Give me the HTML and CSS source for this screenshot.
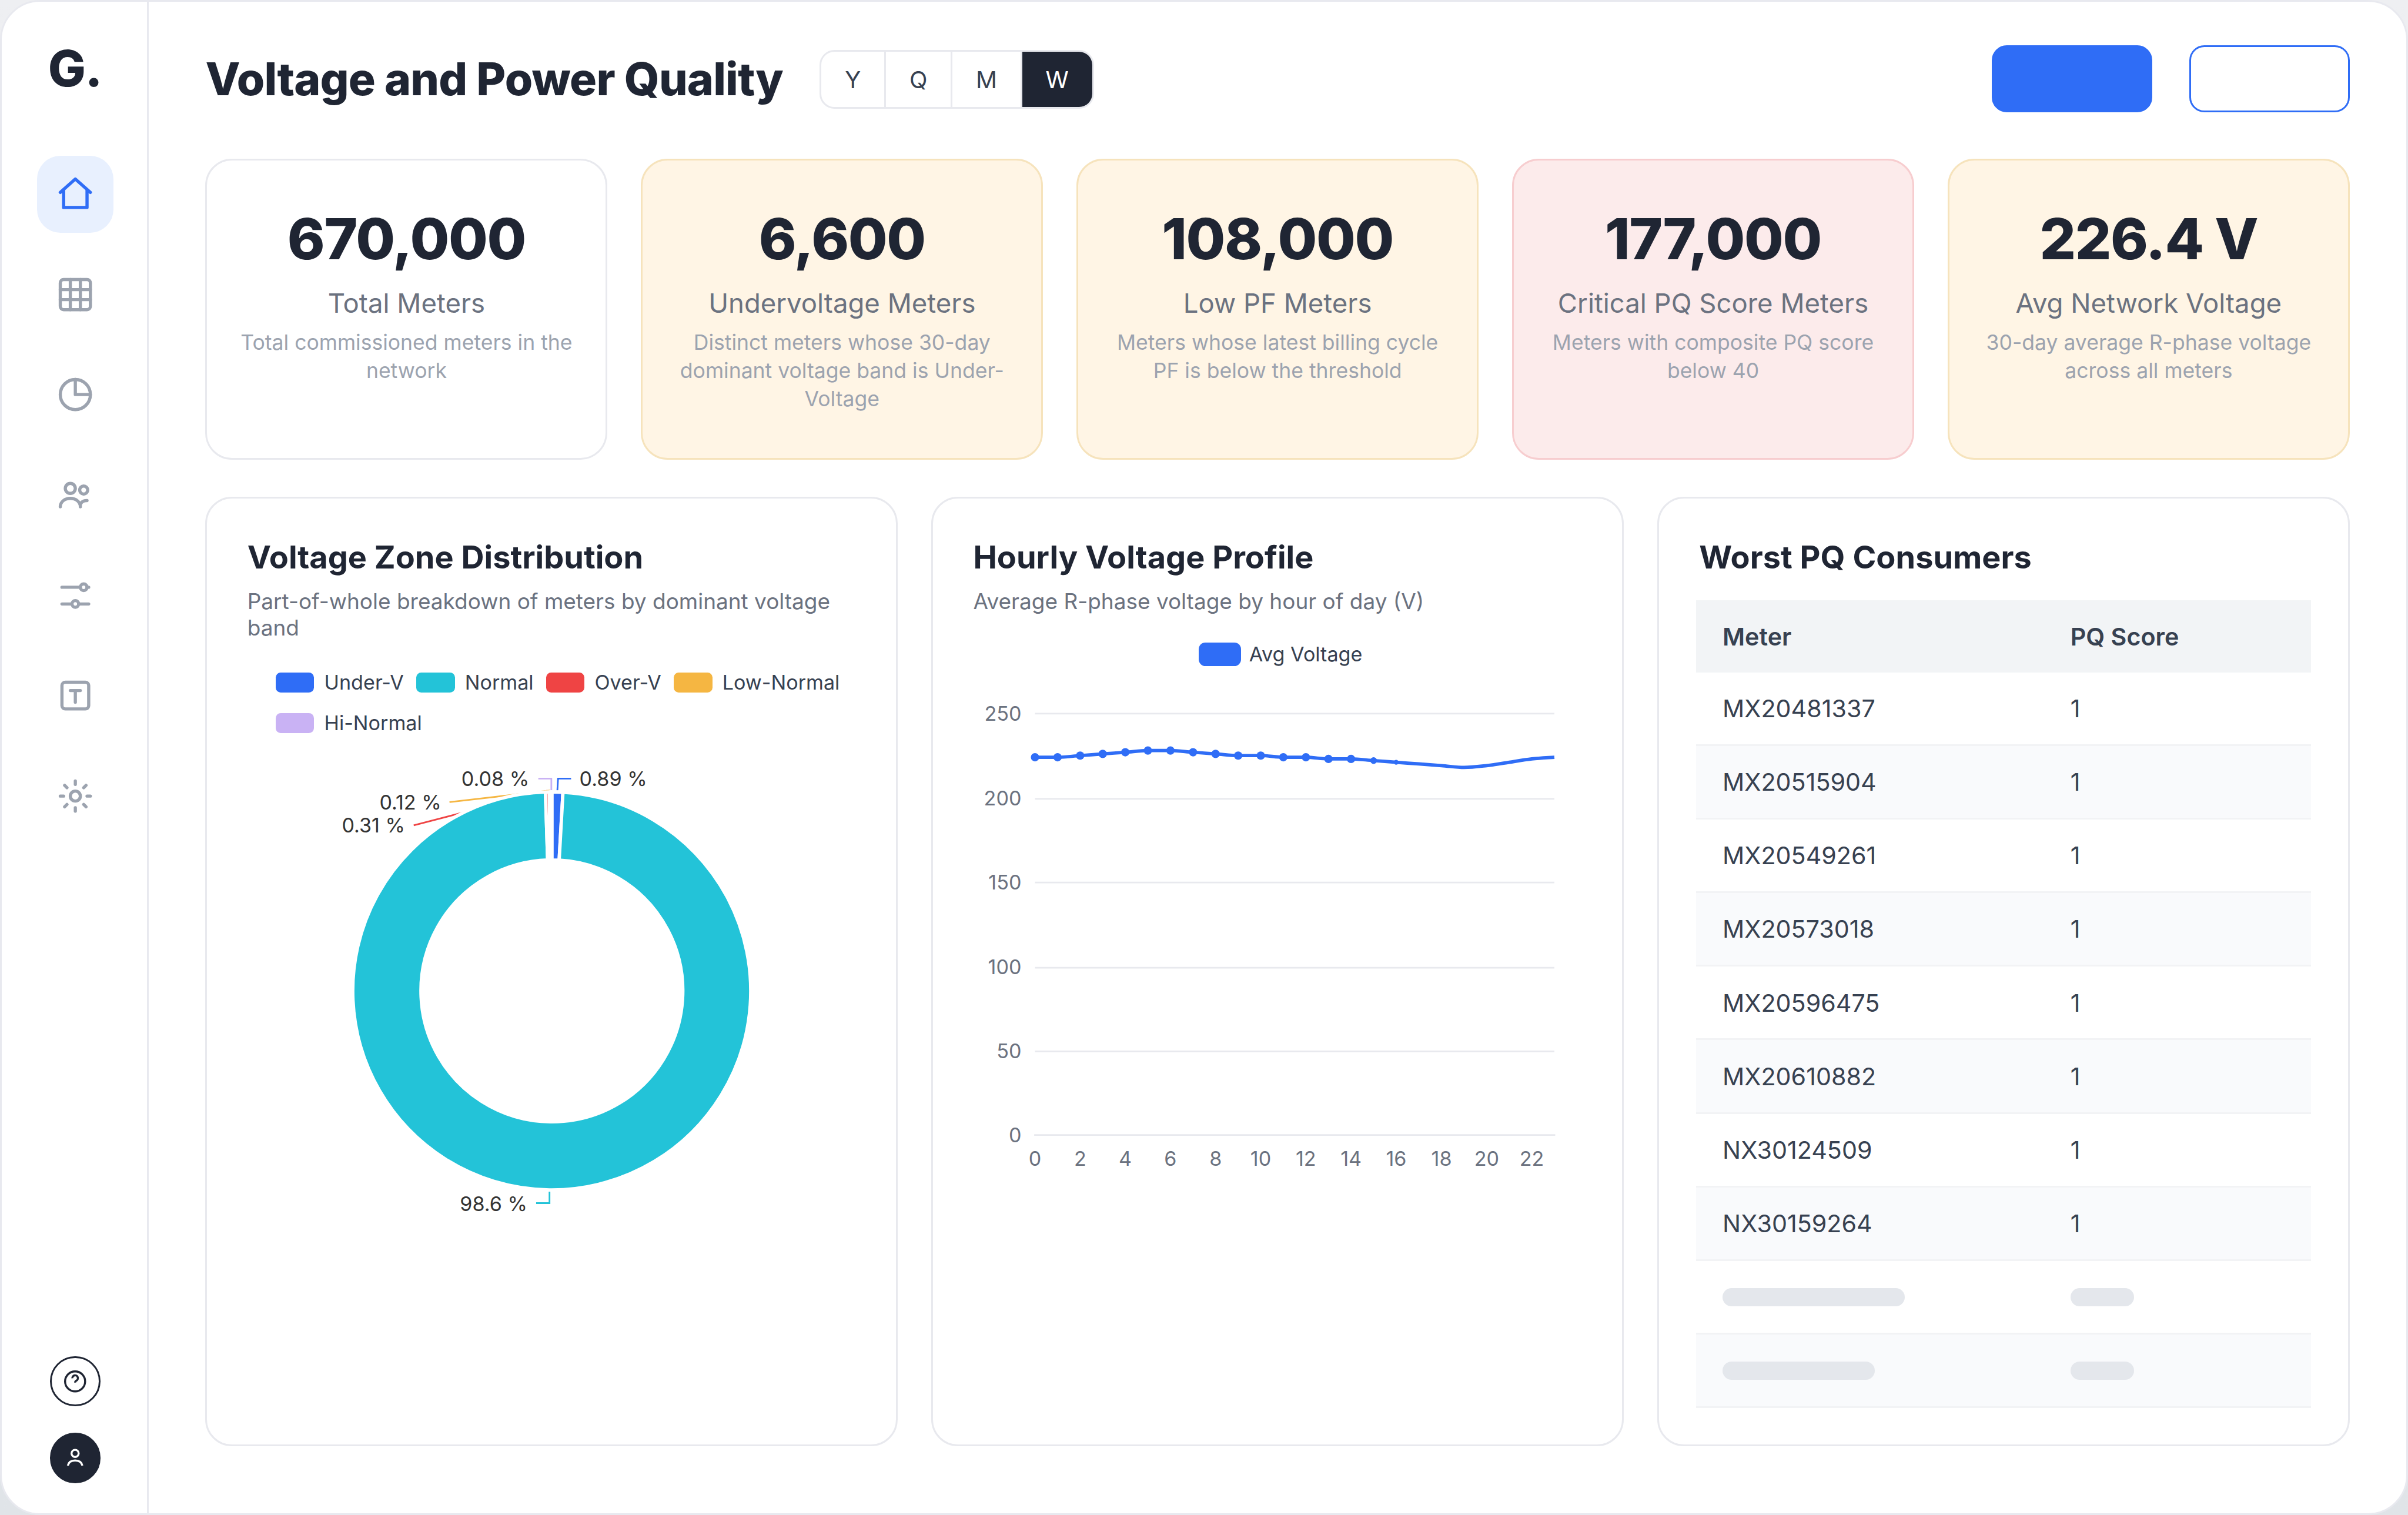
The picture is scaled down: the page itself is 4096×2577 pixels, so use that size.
FILE: index.html
```html
<!DOCTYPE html>
<html lang="en">
<head>
<meta charset="utf-8">
<title>Voltage and Power Quality</title>
<link rel="stylesheet" href="styles.css">
</head>
<body>
<div class="shell">
  <aside class="sidebar">
    <div class="logo">G.</div>
    <nav class="nav">
      <a class="nav-item active"><svg viewBox="0 0 24 24"><path d="M3 11l9-8 9 8M5 9.4V20h14V9.4"/></svg></a>
      <a class="nav-item"><svg viewBox="0 0 24 24"><rect x="3" y="3" width="18" height="18" rx="2"/><path d="M3 9h18M3 15h18M9 3v18M15 3v18"/></svg></a>
      <a class="nav-item"><svg viewBox="0 0 24 24"><circle cx="12" cy="12" r="9"/><path d="M12 3v9h9"/></svg></a>
      <a class="nav-item"><svg viewBox="0 0 24 24"><circle cx="9" cy="8" r="3"/><circle cx="17" cy="9" r="2.4"/><path d="M3 19c0-3 2.7-5 6-5s6 2 6 5M15 18c.2-1.8 2-2.8 4-2.7"/></svg></a>
      <a class="nav-item"><svg viewBox="0 0 24 24"><path d="M4 7h11M19 7h1M4 17h6M14 17h6"/><circle cx="17" cy="7" r="2"/><circle cx="12" cy="17" r="2"/></svg></a>
      <a class="nav-item"><svg viewBox="0 0 24 24"><rect x="4" y="4" width="16" height="16" rx="2"/><path d="M9 9h6M12 9v7"/></svg></a>
      <a class="nav-item"><svg viewBox="0 0 24 24"><circle cx="12" cy="12" r="3"/><path d="M12 3v2M12 19v2M3 12h2M19 12h2M5.6 5.6L7 7M17 17l1.4 1.4M5.6 18.4L7 17M17 7l1.4-1.4"/></svg></a>
    </nav>
    <div class="sidebar-foot">
      <a class="round help"><svg viewBox="0 0 24 24"><circle cx="12" cy="12" r="9"/><path d="M9.5 9.2a2.5 2.5 0 1 1 3.6 2.1c-.8.4-1.1.9-1.1 1.7"/></svg></a>
      <a class="round user"><svg viewBox="0 0 24 24"><circle cx="12" cy="8" r="3.2"/><path d="M5.5 19c.6-2.9 3-4.6 6.5-4.6s5.9 1.7 6.5 4.6"/></svg></a>
    </div>
  </aside>

  <main class="main">
    <header class="header">
      <h1 class="title">Voltage and Power Quality</h1>
      <div class="tabs">
        <span class="tab">Y</span><span class="tab">Q</span><span class="tab">M</span><span class="tab selected">W</span>
      </div>
      <div class="actions">
        <span class="button primary"></span>
        <span class="button outline"></span>
      </div>
    </header>

    <section class="kpis">
      <article class="kpi"><div class="kpi-value">670,000</div><div class="kpi-label">Total Meters</div><div class="kpi-desc">Total commissioned meters in the network</div></article>
      <article class="kpi warn"><div class="kpi-value">6,600</div><div class="kpi-label">Undervoltage Meters</div><div class="kpi-desc">Distinct meters whose 30-day dominant voltage band is Under-Voltage</div></article>
      <article class="kpi warn"><div class="kpi-value">108,000</div><div class="kpi-label">Low PF Meters</div><div class="kpi-desc">Meters whose latest billing cycle PF is below the threshold</div></article>
      <article class="kpi critical"><div class="kpi-value">177,000</div><div class="kpi-label">Critical PQ Score Meters</div><div class="kpi-desc">Meters with composite PQ score below 40</div></article>
      <article class="kpi warn"><div class="kpi-value">226.4 V</div><div class="kpi-label">Avg Network Voltage</div><div class="kpi-desc">30-day average R-phase voltage across all meters</div></article>
    </section>

    <section class="panels">
      <article class="panel">
        <h2 class="panel-title">Voltage Zone Distribution</h2>
        <p class="panel-sub">Part-of-whole breakdown of meters by dominant voltage band</p>
        <ul class="legend">
          <li class="blue">Under-V</li>
          <li class="teal">Normal</li>
          <li class="red">Over-V</li>
          <li class="amber">Low-Normal</li>
          <li class="violet">Hi-Normal</li>
        </ul>
        <svg class="donut" viewBox="0 0 364 300">
          <g class="leads">
            <path stroke="#2f6df6" d="M185.3 28.2L185.7 21.2H193.5"/>
            <path stroke="#23c3d8" d="M180.6 268.2V275.1H172.6"/>
            <path stroke="#ef4444" d="M179.4 28.4L99.4 49.2"/>
            <path stroke="#f5b642" d="M180.9 28.4L120.8 35.3"/>
            <path stroke="#c9b2f4" d="M181.7 28.2V21.2H173.9"/>
          </g>
          <g class="slices">
            <path fill="#2f6df6" d="M182 29.2A119 119 0 0 1 188.65 29.39L186.38 70.02A78.3 78.3 0 0 0 182 69.9Z"/>
            <path fill="#23c3d8" d="M188.65 29.39A119 119 0 1 1 178.19 29.26L179.49 69.94A78.3 78.3 0 1 0 186.38 70.02Z"/>
            <path fill="#ef4444" d="M178.19 29.26A119 119 0 0 1 180.5 29.21L181.02 69.91A78.3 78.3 0 0 0 179.49 69.94Z"/>
            <path fill="#f5b642" d="M180.5 29.21A119 119 0 0 1 181.4 29.2L181.61 69.9A78.3 78.3 0 0 0 181.02 69.91Z"/>
            <path fill="#c9b2f4" d="M181.4 29.2A119 119 0 0 1 182 29.2V69.9A78.3 78.3 0 0 0 181.61 69.9Z"/>
          </g>
          <g class="slice-labels">
            <text x="198.5" y="25.6">0.89 %</text>
            <text x="127.9" y="25.6">0.08 %</text>
            <text x="78.9" y="39.6">0.12 %</text>
            <text x="56.4" y="53.6">0.31 %</text>
            <text x="127" y="279.8">98.6 %</text>
          </g>
        </svg>
      </article>

      <article class="panel">
        <h2 class="panel-title">Hourly Voltage Profile</h2>
        <p class="panel-sub">Average R-phase voltage by hour of day (V)</p>
        <ul class="legend single">
          <li class="blue">Avg Voltage</li>
        </ul>
        <svg class="line-chart" viewBox="0 0 364 300">
          <path class="grid" d="M37.1 23.5H347.7M37.1 74.5H347.7M37.1 124.5H347.7M37.1 175.5H347.7M37.1 225.5H347.7M36.6 275.5H348.2"/>
          <g class="y-axis">
            <text x="29" y="27.9">250</text><text x="29" y="78.4">200</text><text x="29" y="128.8">150</text>
            <text x="29" y="179.2">100</text><text x="29" y="229.5">50</text><text x="29" y="279.9">0</text>
          </g>
          <g class="x-axis">
            <text x="37.1" y="294">0</text><text x="64.1" y="294">2</text><text x="91.1" y="294">4</text>
            <text x="118.1" y="294">6</text><text x="145.1" y="294">8</text><text x="172.1" y="294">10</text>
            <text x="199.1" y="294">12</text><text x="226.1" y="294">14</text><text x="253.1" y="294">16</text>
            <text x="280.2" y="294">18</text><text x="307.2" y="294">20</text><text x="334.2" y="294">22</text>
          </g>
          <path class="series" d="M37.1 49.6C41.6 49.6 46.1 49.6 50.6 49.6S59.6 48.9 64.1 48.6S73.1 47.9 77.6 47.6S86.6 46.9 91.1 46.6S100.1 45.6 104.6 45.6S113.6 45.6 118.1 45.6S127.1 46.3 131.6 46.6S140.6 47.3 145.1 47.6S154.1 48.6 158.6 48.6S167.6 48.6 172.1 48.6S181.1 49.6 185.6 49.6S194.6 49.6 199.1 49.6S208.1 50.6 212.6 50.6S221.6 50.6 226.1 50.6S235.1 51.3 239.6 51.6S248.6 52.3 253.1 52.6S262.1 53.3 266.6 53.6S275.7 54.3 280.2 54.6S289.2 55.7 293.7 55.7S302.7 55.1 307.2 54.6S316.2 53.3 320.7 52.6S329.7 51.1 334.2 50.6S343.2 49.9 347.7 49.6"/>
          <g class="dots">
            <circle cx="37.1" cy="49.6" r="2.5"/><circle cx="50.6" cy="49.6" r="2.5"/><circle cx="64.1" cy="48.6" r="2.5"/>
            <circle cx="77.6" cy="47.6" r="2.5"/><circle cx="91.1" cy="46.6" r="2.5"/><circle cx="104.6" cy="45.6" r="2.5"/>
            <circle cx="118.1" cy="45.6" r="2.5"/><circle cx="131.6" cy="46.6" r="2.5"/><circle cx="145.1" cy="47.6" r="2.5"/>
            <circle cx="158.6" cy="48.6" r="2.5"/><circle cx="172.1" cy="48.6" r="2.5"/><circle cx="185.6" cy="49.6" r="2.5"/>
            <circle cx="199.1" cy="49.6" r="2.5"/><circle cx="212.6" cy="50.6" r="2.5"/><circle cx="226.1" cy="50.6" r="2.5"/>
            <circle cx="239.6" cy="51.6" r="2"/><circle cx="253.1" cy="52.6" r="1.45"/>
          </g>
        </svg>
      </article>

      <article class="panel table-panel">
        <h2 class="panel-title">Worst PQ Consumers</h2>
        <table class="table">
          <thead><tr><th>Meter</th><th>PQ Score</th></tr></thead>
          <tbody>
            <tr><td>MX20481337</td><td>1</td></tr>
            <tr><td>MX20515904</td><td>1</td></tr>
            <tr><td>MX20549261</td><td>1</td></tr>
            <tr><td>MX20573018</td><td>1</td></tr>
            <tr><td>MX20596475</td><td>1</td></tr>
            <tr><td>MX20610882</td><td>1</td></tr>
            <tr><td>NX30124509</td><td>1</td></tr>
            <tr><td>NX30159264</td><td>1</td></tr>
            <tr><td><span class="skeleton wide"></span></td><td><span class="skeleton"></span></td></tr>
            <tr><td><span class="skeleton medium"></span></td><td><span class="skeleton"></span></td></tr>
          </tbody>
        </table>
      </article>
    </section>
  </main>
</div>
</body>
</html>
```
FILE: styles.css
```css
/* 1rem is one 144th of the window width */
html {
  font-size: calc(100vw / 144);
}

* {
  box-sizing: border-box;
  margin: 0;
  padding: 0;
}

body {
  height: 100vh;
  overflow: hidden;
  background: linear-gradient(#eeeff2, #e0e4e8);
  color: #1f2533;
  font-family: Inter, "Liberation Sans", sans-serif;
}

.shell {
  display: flex;
  height: 100vh;
  background: #fff;
  border: 3px solid #e8e9ef;
  border-radius: 2.4rem;
  overflow: hidden;
}

/* Sidebar */
.sidebar {
  flex: none;
  display: flex;
  flex-direction: column;
  align-items: center;
  width: 8.8rem;
  padding: 2.5rem 0 1.8rem 0.1rem;
  border-right: 3px solid #e8e9ef;
}

.logo {
  align-self: flex-start;
  margin-left: 2.67rem;
  font-size: 3rem;
  line-height: 3rem;
  font-weight: 800;
  letter-spacing: -0.05rem;
}

.nav {
  display: flex;
  flex-direction: column;
  gap: 1.4rem;
  margin-top: 3.7rem;
}

.nav-item {
  display: flex;
  align-items: center;
  justify-content: center;
  width: 4.6rem;
  height: 4.6rem;
  border-radius: 1.4rem;
  color: #9ca3af;
}

.nav-item.active {
  background: #e8f0fe;
  color: #2f6df6;
}

.nav-item svg,
.round svg {
  width: 2.4rem;
  height: 2.4rem;
  fill: none;
  stroke: currentColor;
  stroke-width: 1.9;
  stroke-linecap: round;
  stroke-linejoin: round;
}

.sidebar-foot {
  display: flex;
  flex-direction: column;
  gap: 1.6rem;
  margin-top: auto;
}

.round {
  display: flex;
  align-items: center;
  justify-content: center;
  width: 3rem;
  height: 3rem;
  border: 3px solid #1f2533;
  border-radius: 50%;
}

.round svg {
  width: 1.6rem;
  height: 1.6rem;
  stroke-width: 1.8;
  stroke-linecap: butt;
}

.user {
  background: #1f2533;
  color: #fff;
}

/* Main column */
.main {
  flex: 1;
  display: flex;
  flex-direction: column;
  padding: 2.6rem 3.4rem 4rem 3.38rem;
}

.header {
  display: flex;
  align-items: center;
  height: 4rem;
}

.title {
  margin-top: 0.06rem;
  font-size: 2.7rem;
  line-height: 3.2rem;
  font-weight: 800;
  letter-spacing: -0.03rem;
  white-space: nowrap;
}

.tabs {
  display: flex;
  height: 3.5rem;
  margin: 0.1rem 0 0 2.2rem;
  border: 3px solid #e8e9ee;
  border-radius: 0.9rem;
  overflow: hidden;
}

.tab {
  display: flex;
  align-items: center;
  padding: 0.04rem 1.4rem 0;
  border-right: 3px solid #e8e9ee;
  color: #374151;
  font-size: 1.4rem;
}

.tab.selected {
  border-right: 0;
  background: #1f2533;
  color: #fff;
}

.actions {
  display: flex;
  gap: 2.2rem;
  margin-left: auto;
}

.button {
  width: 9.6rem;
  height: 4rem;
  border: 3px solid #2f6df6;
  border-radius: 0.9rem;
}

.button.primary {
  background: #2f6df6;
}

/* Key figures */
.kpis {
  display: grid;
  grid-template-columns: repeat(5, 1fr);
  gap: 2rem;
  height: 18rem;
  margin-top: 2.8rem;
}

.kpi {
  padding: 2.96rem 1.8rem 0;
  border: 3px solid #e8e9ee;
  border-radius: 1.6rem;
  text-align: center;
}

.kpi.warn {
  background: #fff5e5;
  border-color: #f6e3bc;
}

.kpi.critical {
  background: #fcebeb;
  border-color: #f7cdcf;
}

.kpi-value {
  font-size: 3.4rem;
  line-height: 3.4rem;
  font-weight: 800;
  letter-spacing: -0.05rem;
}

.kpi-label {
  margin-top: 1.18rem;
  color: #6b7280;
  font-size: 1.6rem;
  line-height: 2rem;
}

.kpi-desc {
  margin-top: 0.5rem;
  color: #9ca3af;
  font-size: 1.25rem;
  line-height: 1.69rem;
}

/* Panels */
.panels {
  flex: 1;
  display: grid;
  grid-template-columns: repeat(3, 1fr);
  gap: 2rem;
  margin-top: 2.2rem;
}

.panel {
  padding: 2.31rem 2.4rem 0;
  border: 3px solid #e8e9ee;
  border-radius: 1.6rem;
}

.panel-title {
  font-size: 1.9rem;
  line-height: 2.4rem;
  font-weight: 700;
}

.panel-sub {
  margin-top: 0.62rem;
  color: #6b7280;
  font-size: 1.3rem;
  line-height: 1.6rem;
}

.legend {
  display: flex;
  flex-wrap: wrap;
  column-gap: 0.75rem;
  margin-top: 1.29rem;
  padding-left: 1.7rem;
  list-style: none;
  color: #374151;
  font-size: 1.2rem;
  line-height: 2.4rem;
  white-space: nowrap;
}

.legend li {
  display: flex;
  align-items: center;
  gap: 0.6rem;
}

.legend li::before {
  content: "";
  width: 2.3rem;
  height: 1.2rem;
  border-radius: 0.3rem;
}

.legend.single {
  margin-top: 1.19rem;
  padding-left: 13.5rem;
}

.legend.single li {
  gap: 0.5rem;
}

.legend.single li::before {
  width: 2.5rem;
  height: 1.4rem;
  border-radius: 0.4rem;
}

.blue::before { background: #2f6df6; }
.teal::before { background: #23c3d8; }
.red::before { background: #ef4444; }
.amber::before { background: #f5b642; }
.violet::before { background: #c9b2f4; }

.donut,
.line-chart {
  display: block;
  width: 36.4rem;
  height: 30rem;
  font-size: 12px;
}

.leads {
  fill: none;
  stroke-width: 1;
}

.slices {
  stroke: #fff;
  stroke-width: 2;
  stroke-linejoin: bevel;
}

.slice-labels {
  fill: #333;
}

.grid {
  stroke: #e8e9ee;
  stroke-width: 1;
}

.y-axis {
  fill: #6b7280;
  text-anchor: end;
}

.x-axis {
  fill: #6b7280;
  text-anchor: middle;
}

.series {
  fill: none;
  stroke: #2f6df6;
  stroke-width: 2;
}

.dots {
  fill: #2f6df6;
}

/* Table */
.table-panel {
  padding: 2.31rem 2.2rem 0;
}

.table-panel .panel-title {
  padding-left: 0.2rem;
}

.table {
  width: 36.8rem;
  margin-top: 1.39rem;
  border-collapse: separate;
  border-spacing: 0;
  table-layout: fixed;
  color: #374151;
  font-size: 1.45rem;
  line-height: 2rem;
  text-align: left;
}

.table th,
.table td {
  height: 4.4rem;
  padding: 0.05rem 1.6rem 0;
  border-bottom: 3px solid #f2f3f5;
  vertical-align: middle;
}

.table th {
  height: 4.3rem;
  border-bottom: 0;
  background: #f2f4f6;
  font-weight: 600;
}

.table th:first-child {
  width: 20.8rem;
}

.table tbody tr:nth-child(even) {
  background: #f9fafc;
}

.skeleton {
  display: block;
  width: 3.8rem;
  height: 1.1rem;
  border-radius: 0.6rem;
  background: #e4e7ec;
}

.skeleton.wide { width: 10.9rem; }
.skeleton.medium { width: 9.1rem; }
```
